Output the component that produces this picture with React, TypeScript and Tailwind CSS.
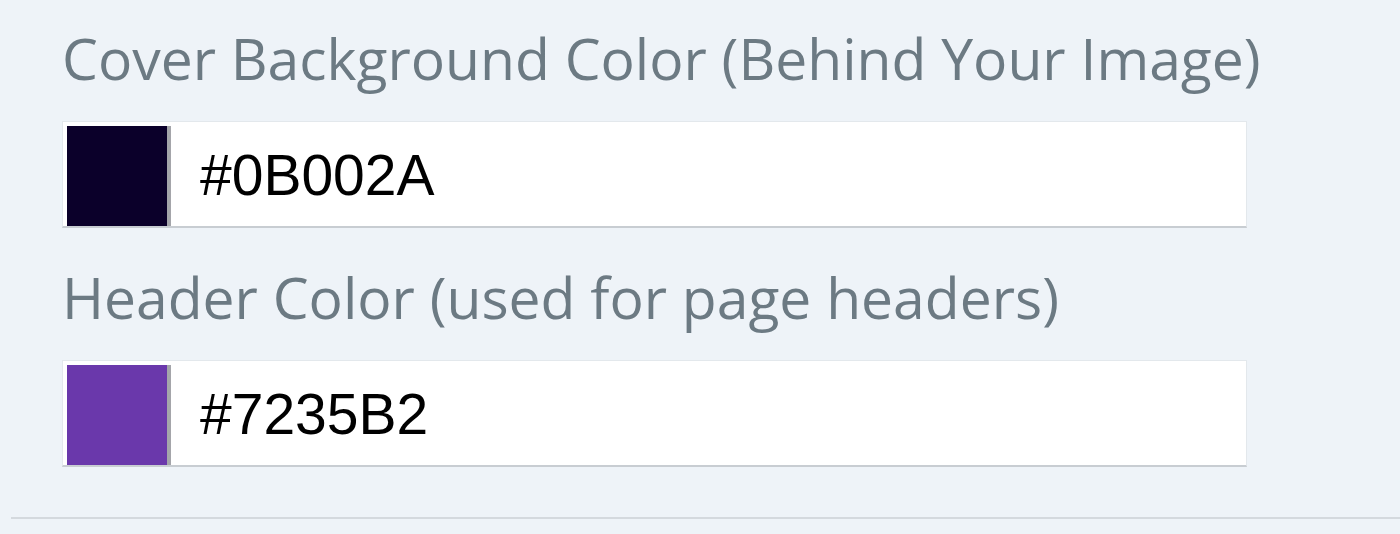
interface ColorFieldProps {
  label: string;
  value: string;
  swatch: string;
  className?: string;
}

function ColorField({ label, value, swatch, className }: ColorFieldProps): JSX.Element {
  return (
    <div className={className ?? ''}>
      <label className="block h-[60px] leading-[60px] text-[57px] text-[#6c7a83] font-['Open_Sans',sans-serif] whitespace-nowrap">
        {label}
      </label>
      <div className="mt-[33px] flex h-[107px] w-[1185px] bg-white border border-[#e3e8ec] border-b-2 border-b-[#c8cdd2] pl-[4px] pt-[4px]">
        <span className={`block w-[104px] h-full border-r-4 border-r-[#a4a5aa] ${swatch}`} />
        <span className="flex items-center pl-[29px] text-[57px] text-black font-['Liberation_Sans',Arial,sans-serif]">
          {value}
        </span>
      </div>
    </div>
  );
}

export default function App(): JSX.Element {
  return (
    <div className="w-[1400px] h-[534px] bg-[#eef3f8] pt-[28px] overflow-hidden">
      <div className="pl-[62px]">
        <ColorField label="Cover Background Color (Behind Your Image)" value="#0B002A" swatch="bg-[#0b002a]" />
        <ColorField label="Header Color (used for page headers)" value="#7235B2" swatch="bg-[#6a38ab]" className="mt-[39px]" />
      </div>
      <div className="mt-[50px] ml-[11px] h-[2px] bg-[#d4d9de]" />
    </div>
  );
}
